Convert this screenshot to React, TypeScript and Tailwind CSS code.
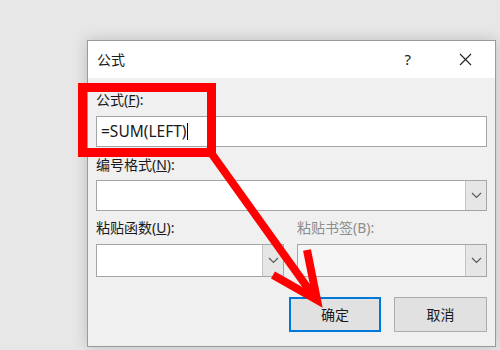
import React from 'react'

const FONT = "font-['Noto_Sans','Noto_Sans_CJK_SC',sans-serif]"

function Chevron() {
  return (
    <svg width="11" height="7" viewBox="0 0 11 7">
      <path d="M1 1 L5.5 5.5 L10 1" fill="none" stroke="#5a5a5a" strokeWidth="1.2" />
    </svg>
  )
}

function Select({ className, disabled }: { className: string; disabled?: boolean }) {
  return (
    <div
      className={`flex border border-[#a5a5a5] ${disabled ? 'bg-[#f6f6f6]' : 'bg-white'} ${className}`}
    >
      <div className="flex-1" />
      <div className="w-[21px] flex items-center justify-center bg-[#e6e6e6] border-l border-[#c4c4c4]">
        <Chevron />
      </div>
    </div>
  )
}

export default function App() {
  return (
    <div className={`relative w-[500px] h-[350px] overflow-hidden bg-[#e7e7e7] ${FONT}`}>
      <div className="pt-[40px] pl-[87px]">
        {/* dialog */}
        <div className="w-[409px] h-[307px] flex flex-col bg-[#f0f0f0] border border-[#9a9a9a] shadow-[0_0_14px_rgba(0,0,0,0.18)]">
          {/* title bar */}
          <div className="h-[37px] bg-white flex items-center pl-[9px] text-[14px] text-[#1a1a1a]">
            <span>公式</span>
            <span className="ml-auto mr-[48px] text-[15px]">?</span>
            <svg width="13" height="13" viewBox="0 0 13 13" className="mr-[23px]">
              <path d="M1 1 L12 12 M12 1 L1 12" stroke="#222" strokeWidth="1.1" />
            </svg>
          </div>

          <div className="flex flex-col pl-[8px] pr-[8px] text-[14px] text-[#1a1a1a]">
            <div className="mt-[12px] h-[20px] leading-[20px]">
              公式(<span className="underline">F</span>):
            </div>
            <div className="mt-[6px] h-[31px] bg-white border border-[#a5a5a5] flex items-center pl-[4px] text-[15.5px]">
              =SUM(LEFT)
              <span className="w-px h-[17px] bg-black ml-[1px]" />
            </div>

            <div className="mt-[8px] h-[20px] leading-[20px]">
              编号格式(<span className="underline">N</span>):
            </div>
            <Select className="mt-[5px] h-[31px]" />

            <div className="mt-[7px] flex">
              <div className="w-[201px] h-[20px] leading-[20px]">
                粘贴函数(<span className="underline">U</span>):
              </div>
              <div className="h-[20px] leading-[20px] text-[#8d8d8d]">粘贴书签(B):</div>
            </div>
            <div className="mt-[6px] flex">
              <Select className="w-[188px] h-[33px]" />
              <Select className="ml-[13px] flex-1 h-[33px]" disabled />
            </div>

            <div className="mt-[20px] flex justify-end gap-[13px]">
              <button className="w-[92px] h-[35px] bg-[#e1e1e1] border-2 border-[#0078d7] text-[14px]">
                确定
              </button>
              <button className="w-[93px] h-[35px] bg-[#e1e1e1] border border-[#adadad] text-[14px]">
                取消
              </button>
            </div>
          </div>
        </div>
      </div>

      {/* red annotation */}
      <svg className="absolute inset-0 pointer-events-none" width="500" height="350" viewBox="0 0 500 350">
        <rect x="82.5" y="87.5" width="129" height="65" fill="none" stroke="#ff0000" strokeWidth="9" />
        <line x1="209" y1="150" x2="315" y2="298" stroke="#ff0000" strokeWidth="8" />
        <path d="M307 250 L317 300 L273 275" fill="none" stroke="#ff0000" strokeWidth="8" strokeLinejoin="miter" />
      </svg>
    </div>
  )
}
